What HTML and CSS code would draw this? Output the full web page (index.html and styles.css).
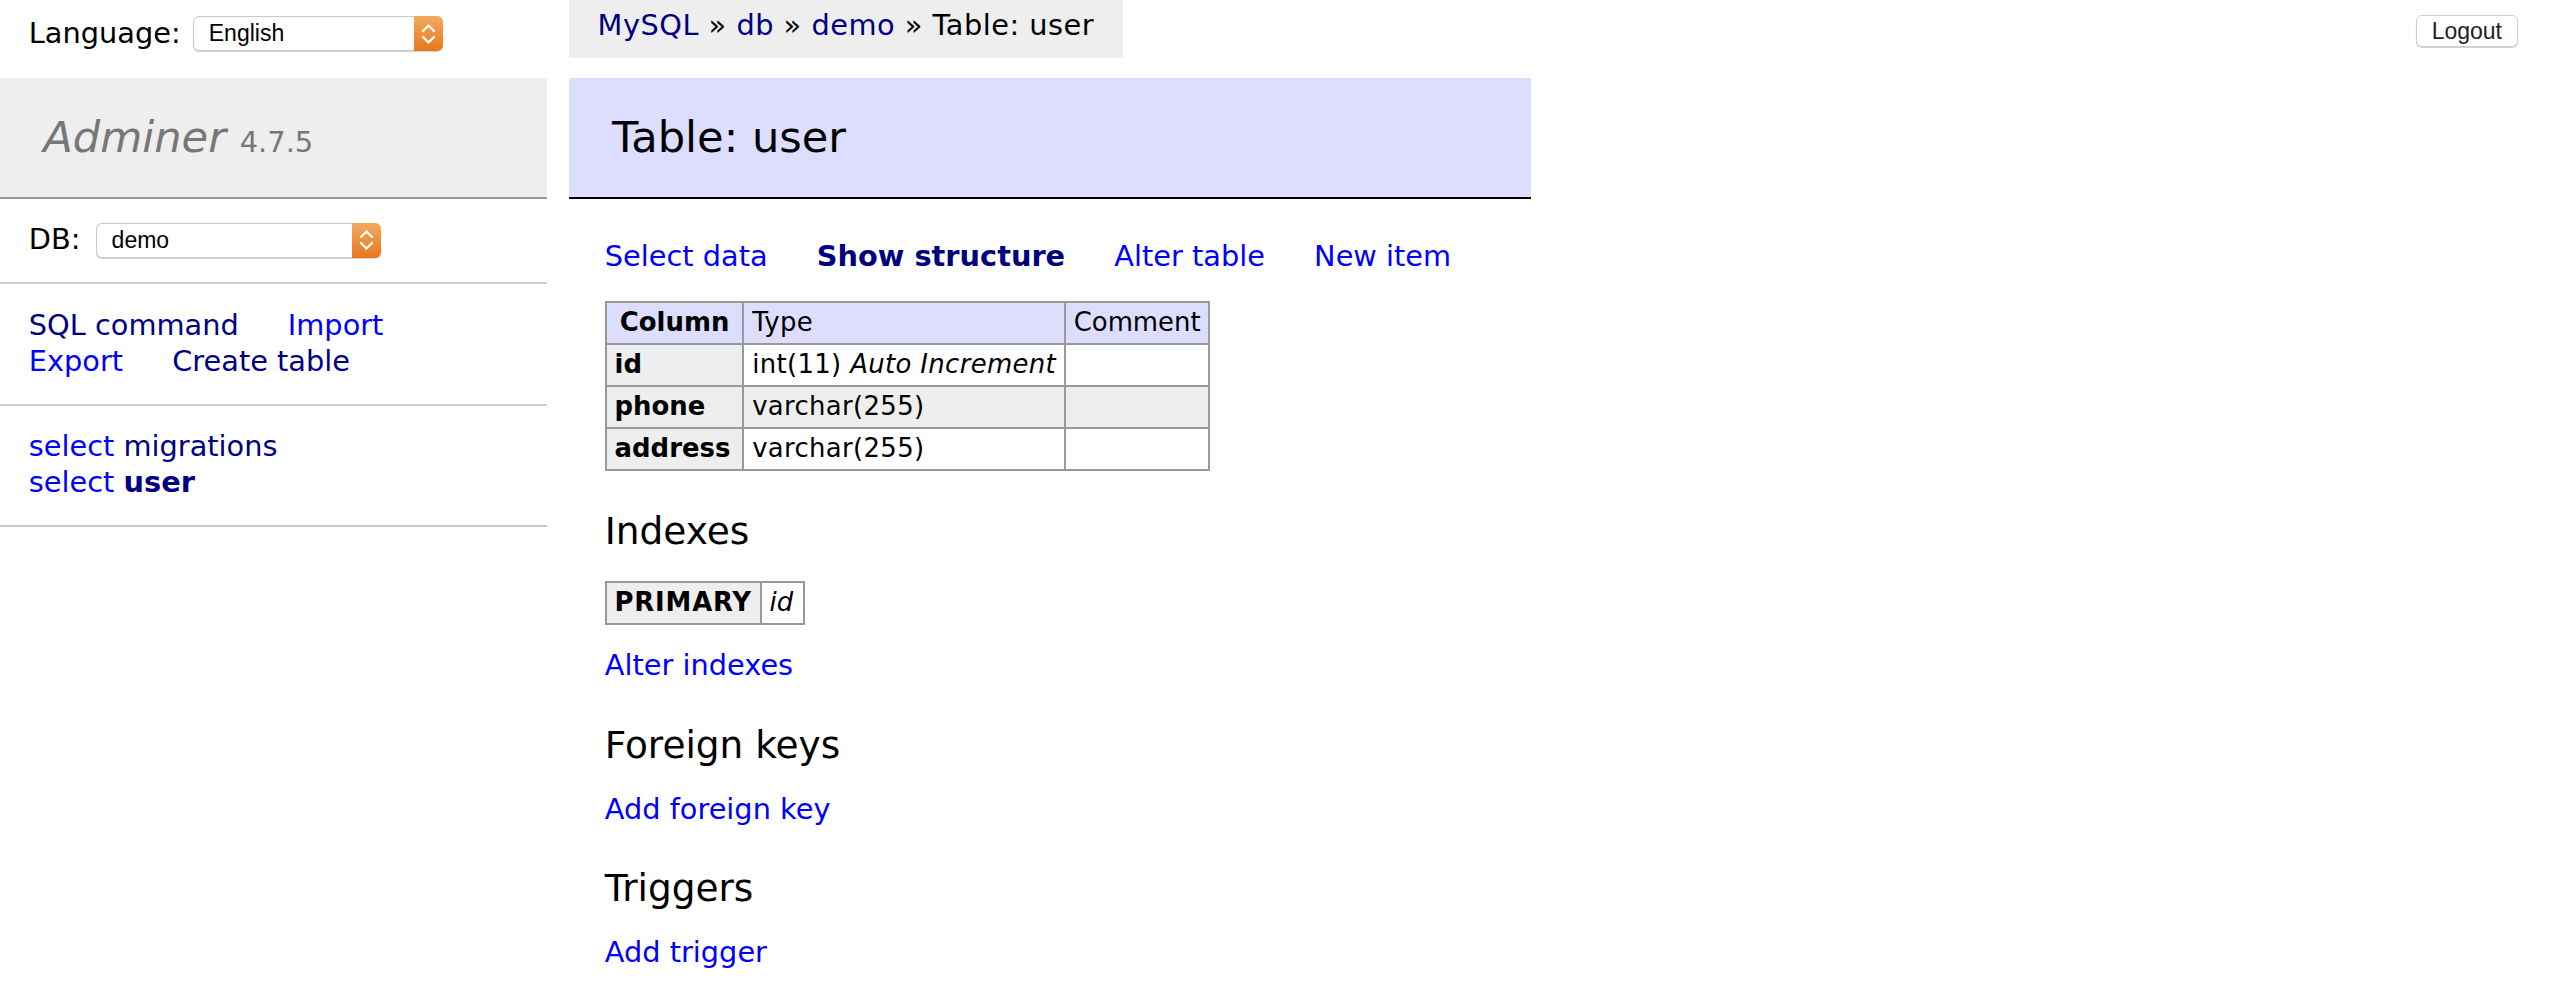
FILE: index.html
```html
<!DOCTYPE html>
<html lang="en">
<head>
<meta charset="utf-8">
<title>Table: user - demo - Adminer</title>
<link rel="stylesheet" href="styles.css">
</head>
<body>
<div class="page">
  <aside class="sidebar">
    <form class="lang">
      <span class="lang-label">Language:</span>
      <span class="fake-select select-lang">
        <span class="select-value">English</span>
        <span class="stepper"><svg width="29" height="34" viewBox="0 0 29 34"><path d="M9 14 L14.5 8.5 L20 14 M9 20 L14.5 25.5 L20 20" fill="none" stroke="#fff" stroke-width="2.4" stroke-linecap="round" stroke-linejoin="round"/></svg></span>
      </span>
    </form>
    <h1 class="brand"><a class="brand-name" href="#">Adminer</a> <span class="version">4.7.5</span></h1>
    <p class="menu-block dbs">
      <span class="dbs-label">DB:</span>
      <span class="fake-select select-db">
        <span class="select-value">demo</span>
        <span class="stepper"><svg width="29" height="34" viewBox="0 0 29 34"><path d="M9 14 L14.5 8.5 L20 14 M9 20 L14.5 25.5 L20 20" fill="none" stroke="#fff" stroke-width="2.4" stroke-linecap="round" stroke-linejoin="round"/></svg></span>
      </span>
    </p>
    <p class="menu-block links">
      <a class="visited" href="#">SQL command</a>
      <a href="#">Import</a>
      <a href="#">Export</a>
      <a class="visited" href="#">Create table</a>
    </p>
    <ul class="menu-block tables">
      <li><a href="#">select</a> <a class="visited" href="#">migrations</a></li>
      <li><a href="#">select</a> <a class="visited active" href="#">user</a></li>
    </ul>
  </aside>

  <main class="main">
    <div class="breadcrumb"><a class="visited" href="#">MySQL</a> » <a class="visited" href="#">db</a> » <a class="visited" href="#">demo</a> » Table: user</div>
    <div class="content">
      <h2 class="title">Table: user</h2>
      <p class="links">
        <a href="#">Select data</a>
        <a class="visited active" href="#">Show structure</a>
        <a href="#">Alter table</a>
        <a href="#">New item</a>
      </p>
      <table class="grid odds">
        <thead>
          <tr><th>Column</th><td class="type">Type</td><td>Comment</td></tr>
        </thead>
        <tbody>
          <tr><th>id</th><td class="type">int(11) <i>Auto Increment</i></td><td></td></tr>
          <tr><th>phone</th><td class="type">varchar(255)</td><td></td></tr>
          <tr><th>address</th><td class="type">varchar(255)</td><td></td></tr>
        </tbody>
      </table>

      <h3 class="section">Indexes</h3>
      <table class="grid index-grid">
        <tbody>
          <tr><th>PRIMARY</th><td><i>id</i></td></tr>
        </tbody>
      </table>
      <p class="links"><a href="#">Alter indexes</a></p>

      <h3 class="section">Foreign keys</h3>
      <p class="links"><a href="#">Add foreign key</a></p>

      <h3 class="section">Triggers</h3>
      <p class="links"><a href="#">Add trigger</a></p>
    </div>
  </main>

  <form class="logout">
    <button type="button" class="logout-button">Logout</button>
  </form>
</div>
</body>
</html>
```

FILE: styles.css
```css
html, body {
  margin: 0;
  padding: 0;
  background: #fff;
}

body {
  color: #000;
  font-family: "DejaVu Sans", Verdana, sans-serif;
  font-size: 28.8px;
  line-height: 1.25;
}

a {
  color: blue;
  text-decoration: none;
}

a.visited {
  color: navy;
}

.active {
  font-weight: bold;
}

.page {
  display: flex;
  align-items: flex-start;
}

/* ---------- sidebar ---------- */
.sidebar {
  flex: none;
  width: 547.2px;
}

.lang {
  box-sizing: border-box;
  height: 57.6px;
  margin: 0;
  padding: 8.6px 28.8px 0;
  line-height: 49px;
  white-space: nowrap;
}

.fake-select {
  display: inline-flex;
  align-items: stretch;
  box-sizing: border-box;
  height: 35px;
  vertical-align: middle;
  margin-left: 3px;
  background: #fff;
  border: 1px solid #c9c9c9;
  border-radius: 6px;
  box-shadow: 0 1px 1px rgba(0, 0, 0, 0.18);
  font-family: "Liberation Sans", Arial, sans-serif;
  font-size: 23px;
  line-height: 33px;
  color: #000;
  position: relative;
  top: -1px;
}

.select-lang {
  width: 250px;
}

.select-db {
  width: 285px;
  margin-left: 6px;
}

.select-value {
  flex: 1;
  padding-left: 15px;
}

.stepper {
  flex: none;
  width: 29px;
  margin: -1px -1px -1px 0;
  border-radius: 0 6px 6px 0;
  background: linear-gradient(#f2ab60, #e8771c);
  display: flex;
  align-items: center;
  justify-content: center;
}

.stepper svg {
  display: block;
}

.brand {
  margin: 20px 0 0;
  padding: 34.56px 43.2px;
  font-size: 43.2px;
  line-height: 50px;
  font-weight: normal;
  color: #777;
  background: #eee;
  border-bottom: 2px solid #999;
  white-space: nowrap;
}

.brand-name {
  color: #777;
  font-style: italic;
}

.version {
  color: #777;
  font-size: 67%;
  line-height: 1;
}

.menu-block {
  margin: 0;
  padding: 23.6px 28.8px;
  border-bottom: 2px solid #ccc;
}

.dbs {
  white-space: nowrap;
}

.links a {
  white-space: nowrap;
  margin-right: 40px;
}

.tables {
  list-style: none;
  white-space: nowrap;
}

.tables li {
  list-style: none;
}

/* ---------- main ---------- */
.main {
  flex: none;
  margin-left: 21.6px;
}

.breadcrumb {
  display: inline-block;
  vertical-align: top;
  white-space: nowrap;
  height: 57.6px;
  line-height: 51.84px;
  padding: 0 28.8px;
  background: #eee;
  letter-spacing: 0.5px;
}

.content {
  padding: 20px 40px 40px 36px;
}

.title {
  margin: 0 0 40px -36px;
  padding: 34.56px 43.2px;
  font-size: 43.2px;
  line-height: 50px;
  font-weight: normal;
  color: #000;
  background: #ddf;
  border-bottom: 2px solid #000;
}

.content .links {
  margin: 23.04px 40px 0 0;
}

.grid {
  margin: 26px 40px 0 0;
  border-collapse: collapse;
  font-size: 25.92px;
  line-height: 29.7px;
  white-space: nowrap;
}

.grid td,
.grid th {
  border: 2px solid #999;
  padding: 5.2px 7.8px;
}

.grid td.type {
  letter-spacing: 0.35px;
}

.grid th {
  background: #eee;
  text-align: left;
}

.grid thead th {
  text-align: center;
  padding: 5.2px 13px;
}

.grid thead td,
.grid thead th {
  background: #ddf;
}

.odds tbody tr:nth-child(2n) {
  background: #eee;
}

.index-grid th {
  letter-spacing: 0.8px;
}

.index-grid td {
  padding-right: 10px;
}

.section {
  font-weight: normal;
  font-size: 37.44px;
  line-height: 1.25;
  margin: 37.44px 0 0;
}

/* ---------- logout ---------- */
.logout {
  flex: none;
  margin: 15px 40px 0 auto;
}

.logout-button {
  display: block;
  box-sizing: border-box;
  height: 32px;
  padding: 0 15px;
  font-family: "Liberation Sans", Arial, sans-serif;
  font-size: 23px;
  line-height: 30px;
  color: #222;
  background: #fff;
  border: 1px solid #cfcfcf;
  border-radius: 6px;
  box-shadow: 0 1px 1px rgba(0, 0, 0, 0.2);
}
```
